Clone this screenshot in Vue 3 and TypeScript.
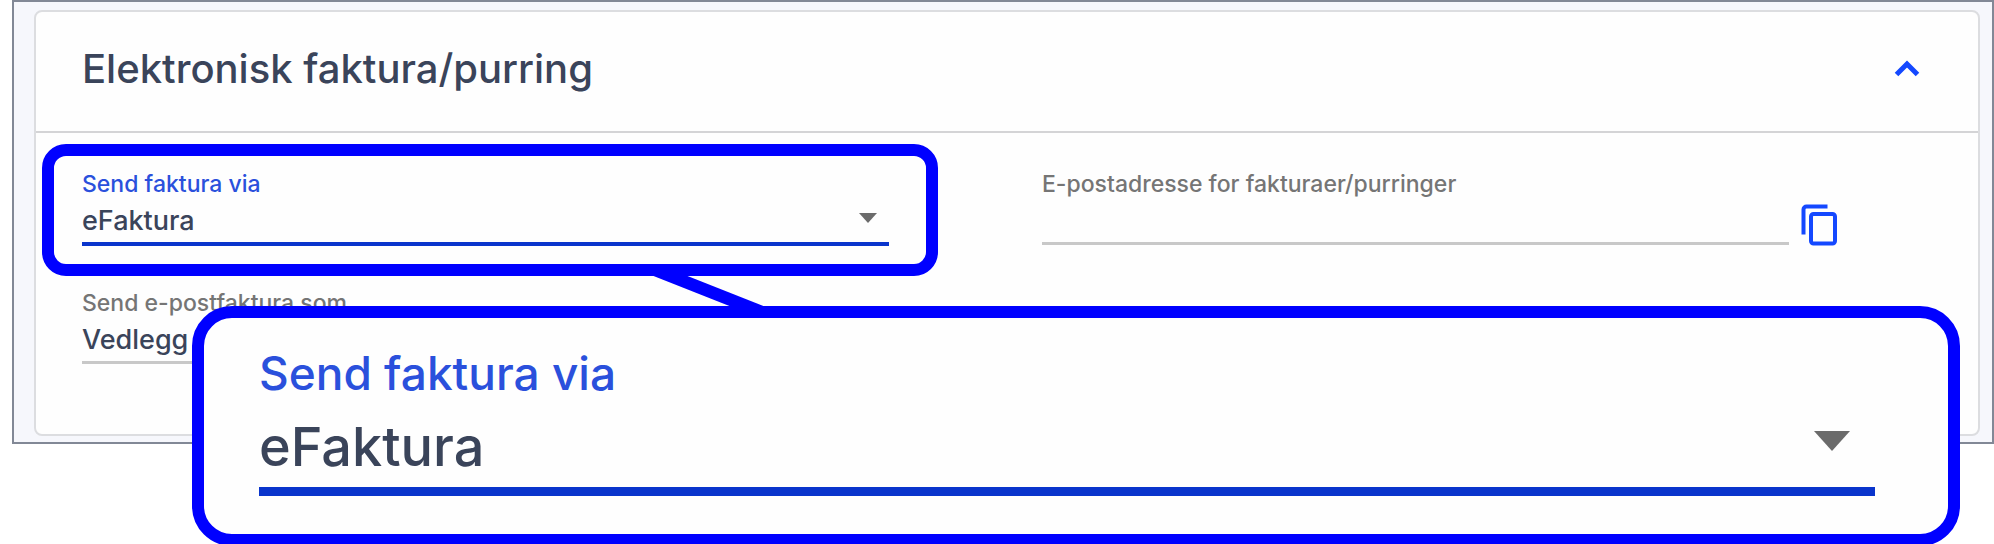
<script setup lang="ts">
import { ref } from 'vue'

const open = ref(true)
const channel = ref('eFaktura')
const format = ref('Vedlegg')
const email = ref('')

const channels = ['eFaktura', 'E-post', 'Papir']
const formats = ['Vedlegg', 'Lenke']

function copyEmail() {
  navigator.clipboard?.writeText(email.value)
}
</script>

<template>
  <main class="scene">
    <div class="backdrop">
      <section class="card">
        <header class="card-header">
          <h1>Elektronisk faktura/purring</h1>
          <button class="icon-button" type="button" aria-label="Vis eller skjul" :aria-expanded="open" @click="open = !open">
            <svg width="26" height="18" viewBox="0 0 26 18" aria-hidden="true">
              <path d="M2.5 14.5 13 4l10.5 10.5" fill="none" stroke="#1448ff" stroke-width="5" />
            </svg>
          </button>
        </header>

        <div v-show="open" class="fields">
          <div class="field focused marked">
            <label for="channel">Send faktura via</label>
            <div class="control">
              <select id="channel" v-model="channel">
                <option v-for="c in channels" :key="c">{{ c }}</option>
              </select>
              <svg class="arrow" viewBox="0 0 18 10" aria-hidden="true"><path d="M0 0h18L9 10z" /></svg>
            </div>
          </div>

          <div class="with-action">
            <div class="field">
              <label for="email">E-postadresse for fakturaer/purringer</label>
              <div class="control">
                <input id="email" v-model="email" type="email" />
              </div>
            </div>
            <button class="icon-button copy" type="button" aria-label="Kopier" @click="copyEmail">
              <svg width="36" height="42" viewBox="0 0 36 42" fill="none" stroke="#1448ff" stroke-width="4" aria-hidden="true">
                <path d="M2.5 30.5V5.500a3 3 0 0 1 3-3H26.500" />
                <rect x="10" y="10" width="24" height="29.500" rx="2.500" />
              </svg>
            </button>
          </div>

          <div class="field">
            <label for="format">Send e-postfaktura som</label>
            <div class="control">
              <select id="format" v-model="format">
                <option v-for="f in formats" :key="f">{{ f }}</option>
              </select>
              <svg class="arrow" viewBox="0 0 18 10" aria-hidden="true"><path d="M0 0h18L9 10z" /></svg>
            </div>
          </div>
        </div>
      </section>
    </div>

    <svg class="connector" width="120" height="34" viewBox="0 0 120 34" aria-hidden="true">
      <path d="M0 0h34l86 34H86z" fill="#0000ff" />
    </svg>

    <aside class="callout">
      <div class="field focused large">
        <label for="channel-large">Send faktura via</label>
        <div class="control">
          <select id="channel-large" v-model="channel">
            <option v-for="c in channels" :key="c">{{ c }}</option>
          </select>
          <svg class="arrow" viewBox="0 0 18 10" aria-hidden="true"><path d="M0 0h18L9 10z" /></svg>
        </div>
      </div>
    </aside>
  </main>
</template>

<style>
body {
  margin: 0;
  background: #fff;
}
</style>

<style scoped>
* {
  box-sizing: border-box;
}

.scene {
  position: relative;
  overflow: hidden;
  padding: 0 0 100px 12px;
  font-family: Inter, Roboto, sans-serif;
  font-weight: 500;
  color: #3a445a;
}

.backdrop {
  padding: 8px 12px 6px 20px;
  border: 2px solid #828896;
  background: #f6f7fc;
}

.card {
  min-height: 426px;
  border: 2px solid #dcdde0;
  border-radius: 8px;
  background: #fefefe;
}

.card-header {
  display: flex;
  align-items: center;
  justify-content: space-between;
  height: 121px;
  padding: 0 56px 6px 46px;
  border-bottom: 2px solid #d4d4d6;
}

h1 {
  margin: 0;
  font-size: 40px;
  font-weight: 500;
  line-height: 48px;
}

.icon-button {
  display: flex;
  align-items: center;
  justify-content: center;
  padding: 0;
  border: 0;
  background: none;
  cursor: pointer;
}

.card-header .icon-button {
  width: 30px;
  height: 30px;
}

.fields {
  display: grid;
  grid-template-columns: 1fr 1fr;
  gap: 6px 153px;
  padding: 36px 129px 0 46px;
}

.field {
  position: relative;
  height: 113px;
}

.field label {
  display: block;
  padding-bottom: 2px;
  font-size: 23px;
  line-height: 30px;
  color: #757575;
}

.control {
  position: relative;
  height: 44px;
  border-bottom: 3px solid #c8c8c8;
}

select,
input {
  display: block;
  width: 100%;
  height: 38px;
  padding: 0;
  border: 0;
  border-radius: 0;
  outline: 0;
  appearance: none;
  background: transparent;
  color: inherit;
  font: 500 27px Inter, sans-serif;
}

.arrow {
  position: absolute;
  top: 12px;
  right: 12px;
  width: 18px;
  fill: #6b6b6b;
  pointer-events: none;
}

.focused label {
  color: #2a50dc;
}

.focused .control {
  height: 45px;
  border-bottom: 4px solid #0a35cc;
}

.marked::after {
  content: '';
  position: absolute;
  inset: -25px -49px 6px -40px;
  border: 12px solid #0000ff;
  border-radius: 24px;
  pointer-events: none;
}

.with-action {
  display: grid;
  grid-template-columns: 1fr 60px;
}

.copy {
  height: 42px;
  margin-top: 35px;
}

.connector {
  position: absolute;
  top: 275px;
  left: 651px;
}

.callout {
  position: absolute;
  top: 306px;
  right: 34px;
  left: 192px;
  height: 240px;
  padding: 25px 73px 0 55px;
  border: 12px solid #0000ff;
  border-radius: 40px;
  background: #fefefe;
}

.large label {
  font-size: 46px;
  line-height: 60px;
}

.focused.large .control {
  height: 91px;
  border-bottom-width: 9px;
}

.large select {
  height: 82px;
  font-size: 54px;
}

.large .arrow {
  top: 26px;
  right: 25px;
  width: 36px;
}
</style>
